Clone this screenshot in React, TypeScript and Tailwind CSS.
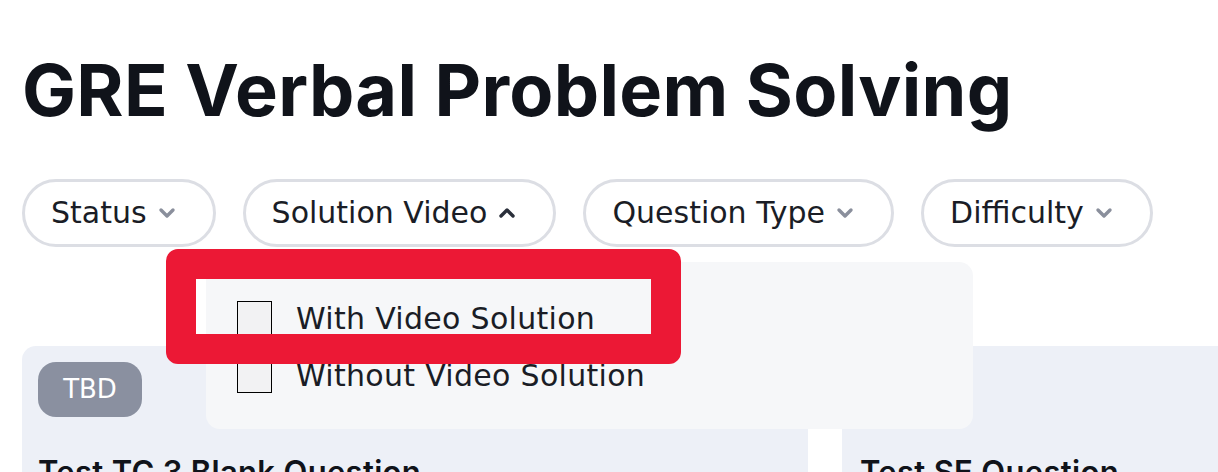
import React from "react";

const BODY = "'DejaVu Sans', 'Noto Sans', sans-serif";

function Chevron({ up = false, dark = false }: { up?: boolean; dark?: boolean }) {
  return (
    <svg width="20" height="14" viewBox="0 0 20 14" className={dark ? "text-[#2a2f3a]" : "text-[#8a8f9c]"}>
      <path
        d={up ? "M4 10 L10 4 L16 10" : "M4 4 L10 10 L16 4"}
        fill="none"
        stroke="currentColor"
        strokeWidth="3.4"
        strokeLinecap="round"
        strokeLinejoin="round"
      />
    </svg>
  );
}

function Pill({ label, up = false }: { label: string; up?: boolean }) {
  return (
    <div className="h-[68px] flex items-center gap-[10px] pl-[26px] pr-[36px] rounded-full border-[3px] border-[#dcdee4] bg-white">
      <span className="text-[30px] font-normal text-[#1a1d26] leading-none" style={{ fontFamily: BODY }}>
        {label}
      </span>
      <Chevron up={up} dark={up} />
    </div>
  );
}

function Check({ label }: { label: string }) {
  return (
    <div className="flex items-center gap-[24px]">
      <div className="w-[35px] h-[35px] border-[1.5px] border-black bg-[#f2f2f3]" />
      <span className="text-[30px] font-normal text-[#1a1d26] leading-none tracking-[0.3px]" style={{ fontFamily: BODY }}>
        {label}
      </span>
    </div>
  );
}

export default function App() {
  return (
    <div
      className="relative w-[1218px] h-[472px] overflow-hidden bg-white"
      style={{ fontFamily: "Inter, 'Noto Sans', sans-serif" }}
    >
      <h1 className="pl-[22px] pt-[48px] text-[72px] font-bold leading-[84px] text-[#10131a] tracking-[0.3px]">
        GRE Verbal Problem Solving
      </h1>
      <div className="flex gap-[27px] pl-[22px] mt-[47px]">
        <Pill label="Status" />
        <Pill label="Solution Video" up />
        <Pill label="Question Type" />
        <Pill label="Difficulty" />
      </div>
      <div className="flex gap-[34px] pl-[22px] mt-[99px]">
        <div className="w-[786px] h-[200px] bg-[#edf0f7] rounded-tl-[14px] pl-[16px] pt-[16px]">
          <div
            className="w-[104px] h-[55px] rounded-[18px] bg-[#8a90a0] text-white text-[26px] font-normal flex items-center justify-center"
            style={{ fontFamily: BODY }}
          >
            TBD
          </div>
          <div className="mt-[39px] text-[31px] font-semibold text-[#10131a] leading-none tracking-[0.3px]">
            Test TC 3 Blank Question
          </div>
        </div>
        <div className="flex-1 h-[200px] bg-[#edf0f7] pl-[18px] pt-[110px]">
          <div className="text-[31px] font-semibold text-[#10131a] leading-none tracking-[0.3px]">Test SE Question</div>
        </div>
      </div>
      <div className="absolute left-[206px] top-[262px] w-[767px] h-[167px] rounded-[14px] bg-[#f6f7f9] pl-[31px] pt-[39px] flex flex-col gap-[22px]">
        <Check label="With Video Solution" />
        <Check label="Without Video Solution" />
      </div>
      <div className="absolute left-[166px] top-[249px] w-[515px] h-[115px] rounded-[12px] border-[30px] border-[#ec1835]" />
    </div>
  );
}
